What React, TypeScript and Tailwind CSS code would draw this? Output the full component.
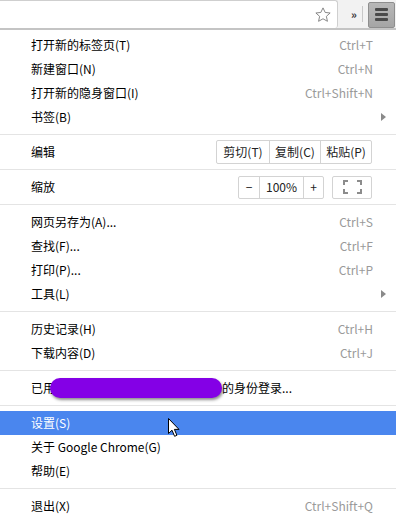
import React from "react";

const font = { fontFamily: '"Noto Sans CJK SC", "Noto Sans", sans-serif' };

function Sep() {
  return <div className="h-px bg-[#e4e4e4]" />;
}

function Arrow() {
  return (
    <svg width="5" height="8" viewBox="0 0 5 8" className="ml-auto mr-[10px]">
      <path d="M0 0 L5 4 L0 8 Z" fill="#8a8a8a" />
    </svg>
  );
}

function Row({
  label,
  shortcut,
  sub,
  active,
  children,
}: {
  label?: React.ReactNode;
  shortcut?: string;
  sub?: boolean;
  active?: boolean;
  children?: React.ReactNode;
}) {
  return (
    <div
      className={`h-[24px] flex items-center pl-[31px] ${sub ? "pr-0" : "pr-[23px]"} ${
        active ? "bg-[#4a86ee] text-white" : "text-black"
      }`}
    >
      <span className="whitespace-nowrap">{label}</span>
      {shortcut && <span className="ml-auto text-[#9a9a9a] whitespace-nowrap">{shortcut}</span>}
      {sub && <Arrow />}
      {children}
    </div>
  );
}

function Group({ children, top }: { children: React.ReactNode; top?: string }) {
  return <div className={`${top ?? "pt-[5px]"} pb-[5px]`}>{children}</div>;
}

export default function App() {
  return (
    <div className="w-[396px] h-[523px] bg-white relative overflow-hidden text-[12px] leading-none" style={font}>
      {/* toolbar */}
      <div className="h-[30px] flex bg-[#f2f2f2] border-b-2 border-[#c4c4c4]">
        <div className="w-[338px] h-full bg-white border-t border-r border-[#cfcfcf] rounded-r-[3px] flex items-center justify-end pr-[4px]">
          <svg width="18" height="18" viewBox="0 0 24 24" className="mr-[1px]">
            <path
              d="M12 2.5 L14.9 8.6 L21.5 9.3 L16.5 13.8 L17.9 20.4 L12 17 L6.1 20.4 L7.5 13.8 L2.5 9.3 L9.1 8.6 Z"
              fill="none"
              stroke="#7a7a7a"
              strokeWidth="1.2"
              strokeLinejoin="round"
            />
          </svg>
        </div>
        <div className="flex items-center pl-[13px]">
          <span className="text-[11px] font-bold text-[#333] leading-none">»</span>
          <div className="w-px h-[16px] bg-[#c8c8c8] ml-[5px]" />
          <div className="ml-[5px] w-[27px] h-[26px] mt-[1px] rounded-[2px] border border-[#8e8e8e] bg-gradient-to-b from-[#b8b8b8] to-[#a5a5a5] flex flex-col items-center justify-center gap-[2px]">
            <div className="w-[13px] h-[3px] rounded-[1px] bg-[#4a4a4a]" />
            <div className="w-[13px] h-[3px] rounded-[1px] bg-[#4a4a4a]" />
            <div className="w-[13px] h-[3px] rounded-[1px] bg-[#4a4a4a]" />
          </div>
        </div>
      </div>

      {/* menu */}
      <div className="bg-white border-b-[3px] border-[#b8b8b8]">
        <Group top="pt-[3px]">
          <Row label="打开新的标签页(T)" shortcut="Ctrl+T" />
          <Row label="新建窗口(N)" shortcut="Ctrl+N" />
          <Row label="打开新的隐身窗口(I)" shortcut="Ctrl+Shift+N" />
          <Row label="书签(B)" sub />
        </Group>
        <Sep />
        <Group>
          <Row label="编辑">
            <div className="ml-auto mr-px flex h-[24px] border border-[#d3d3d3] rounded-[2px] text-[#222]">
              <div className="w-[52px] flex items-center justify-center">剪切(T)</div>
              <div className="w-[51px] flex items-center justify-center border-l border-[#d3d3d3]">复制(C)</div>
              <div className="w-[51px] flex items-center justify-center border-l border-[#d3d3d3]">粘贴(P)</div>
            </div>
          </Row>
        </Group>
        <Sep />
        <Group>
          <Row label="缩放">
            <div className="ml-auto mr-px flex items-center gap-[8px]">
              <div className="flex h-[23px] border border-[#d3d3d3] rounded-[2px] text-[#222]">
                <div className="w-[20px] flex items-center justify-center">−</div>
                <div className="w-[44px] flex items-center justify-center border-l border-[#d3d3d3]">100%</div>
                <div className="w-[20px] flex items-center justify-center border-l border-[#d3d3d3]">+</div>
              </div>
              <div className="w-[40px] h-[23px] border border-[#d3d3d3] rounded-[2px] flex items-center justify-center">
                <svg width="19" height="14" viewBox="0 0 19 14">
                  <path
                    d="M1 5 V1 H5 M14 1 H18 V5 M18 9 V13 H14 M5 13 H1 V9"
                    fill="none"
                    stroke="#8c8c8c"
                    strokeWidth="2"
                  />
                </svg>
              </div>
            </div>
          </Row>
        </Group>
        <Sep />
        <Group>
          <Row label="网页另存为(A)..." shortcut="Ctrl+S" />
          <Row label="查找(F)..." shortcut="Ctrl+F" />
          <Row label="打印(P)..." shortcut="Ctrl+P" />
          <Row label="工具(L)" sub />
        </Group>
        <Sep />
        <Group>
          <Row label="历史记录(H)" shortcut="Ctrl+H" />
          <Row label="下载内容(D)" shortcut="Ctrl+J" />
        </Group>
        <Sep />
        <Group>
          <Row
            label={
              <span className="flex items-center">
                <span>已用</span>
                <span className="inline-block w-[172px] h-[20px] -ml-[5px] rounded-full bg-[#8400e6] shadow-[1px_2px_3px_rgba(0,0,0,0.45)]" />
                <span>的身份登录...</span>
              </span>
            }
          />
        </Group>
        <Sep />
        <Group>
          <Row label="设置(S)" active />
          <Row label="关于 Google Chrome(G)" />
          <Row label="帮助(E)" />
        </Group>
        <Sep />
        <Group top="pt-[5px]">
          <Row label="退出(X)" shortcut="Ctrl+Shift+Q" />
        </Group>
      </div>

      {/* mouse cursor */}
      <svg width="13" height="20" viewBox="0 0 13 20" className="absolute left-[168px] top-[418px]">
        <path
          d="M0.5 0.5 L0.5 15.5 L4 12.2 L6.6 18.3 L8.9 17.3 L6.4 11.4 L11 11.4 Z"
          fill="white"
          stroke="black"
          strokeWidth="1"
          strokeLinejoin="round"
        />
      </svg>
    </div>
  );
}
